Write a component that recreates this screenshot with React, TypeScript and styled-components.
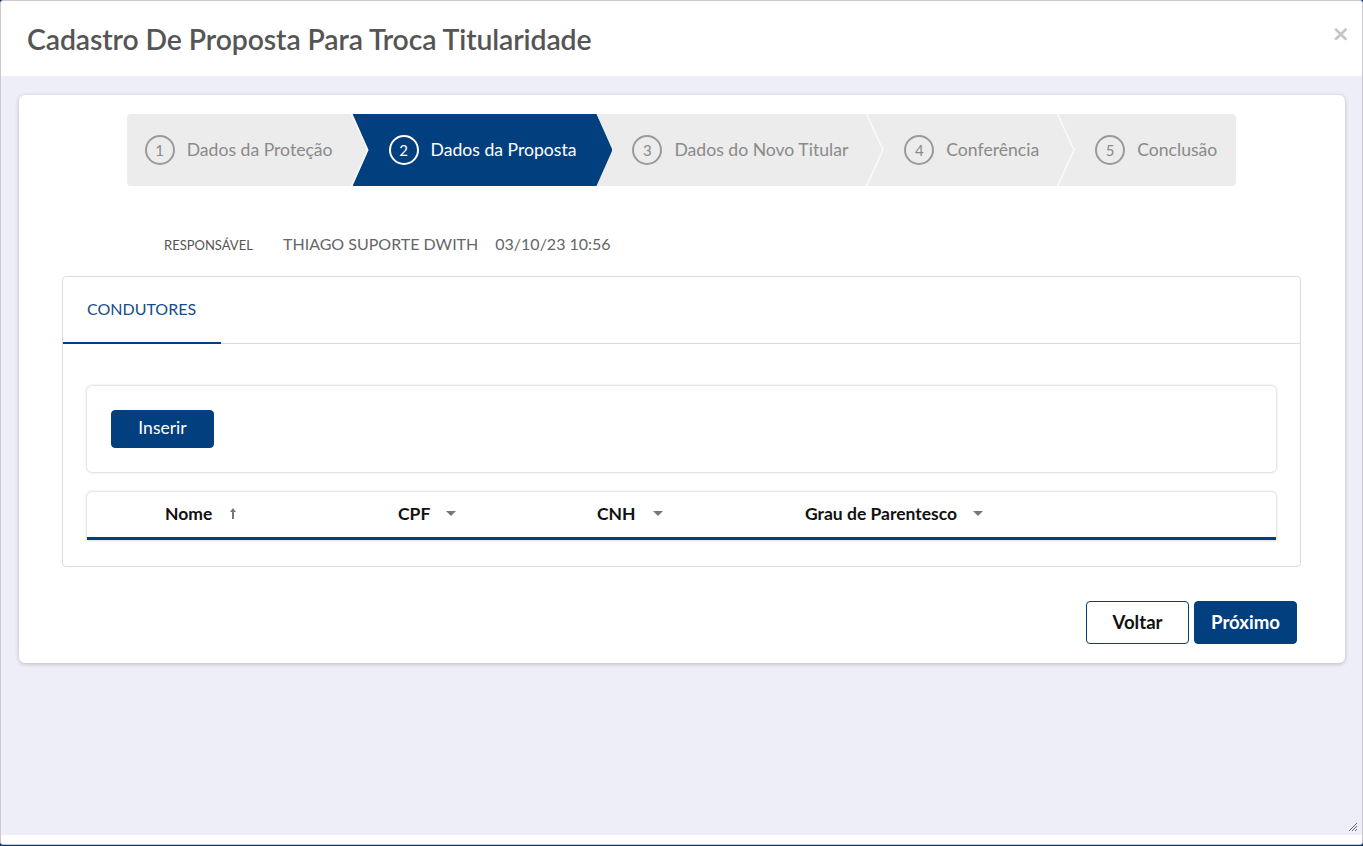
import React from "react";
import styled, { createGlobalStyle } from "styled-components";

const BLUE = "#023f7f";

const GlobalStyle = createGlobalStyle`
  html, body {
    margin: 0;
    padding: 0;
    background: #0d3766;
    font-family: "Lato", "Noto Sans", sans-serif;
  }
  * { box-sizing: border-box; }
`;

const Dialog = styled.div`
  width: 1363px;
  height: 845px;
  background: #fff;
  border: 1px solid #c9c9cf;
  border-radius: 3px;
  display: flex;
  flex-direction: column;
  overflow: hidden;
  position: relative;
`;

const Header = styled.header`
  height: 75px;
  flex: none;
  display: flex;
  align-items: center;
  justify-content: space-between;
  padding: 0 12px 0 26px;
`;

const Title = styled.h1`
  margin: 0;
  font-size: 28.4px;
  font-weight: 600;
  color: #555;
  letter-spacing: -0.1px;
`;

const Close = styled.button`
  border: 0;
  background: none;
  color: #c4c4c4;
  font-size: 22px;
  font-weight: 700;
  line-height: 1;
  padding: 0;
  margin-top: -10px;
  font-family: "DejaVu Sans", sans-serif;
  cursor: pointer;
`;

const Body = styled.div`
  flex: 1;
  background: #eeeef8;
  padding: 19px 17px 0 18px;
  position: relative;
`;

const FooterStrip = styled.div`
  height: 9px;
  flex: none;
  background: #fff;
`;

const Grip = styled.svg`
  position: absolute;
  right: 4px;
  bottom: 3px;
`;

const Card = styled.section`
  background: #fff;
  border-radius: 6px;
  box-shadow: 0 1px 4px rgba(0, 0, 0, 0.22);
  padding: 19px 44px 19px 43px;
  display: flex;
  flex-direction: column;
`;

const Stepper = styled.ol`
  align-self: center;
  display: flex;
  margin: 0;
  padding: 0;
  list-style: none;
  height: 72px;
  background: #ececec;
  border-radius: 4px;
`;

const Step = styled.li<{ $active?: boolean; $first?: boolean; $last?: boolean }>`
  position: relative;
  display: flex;
  align-items: center;
  gap: 12px;
  height: 100%;
  padding-left: ${(p) => (p.$first ? "18px" : "36px")};
  padding-right: ${(p) => (p.$last ? "19px" : "36px")};
  margin-right: ${(p) => (p.$last ? "0" : "-16px")};
  background: ${(p) => (p.$active ? BLUE : "transparent")};
  color: ${(p) => (p.$active ? "#fff" : "#8a8a8a")};
  z-index: ${(p) => (p.$active ? 2 : 1)};
  font-size: 17.6px;
  padding-bottom: 1px;
  white-space: nowrap;
  clip-path: ${(p) =>
    p.$active
      ? "polygon(0 0, calc(100% - 16px) 0, 100% 50%, calc(100% - 16px) 100%, 0 100%, 16px 50%)"
      : "none"};
`;

const StepNumber = styled.span<{ $active?: boolean }>`
  width: 30px;
  height: 30px;
  border-radius: 50%;
  border: 2px solid ${(p) => (p.$active ? "#fff" : "#9a9a9a")};
  display: flex;
  align-items: center;
  justify-content: center;
  font-size: 15px;
  color: ${(p) => (p.$active ? "#fff" : "#8a8a8a")};
  flex: none;
`;

const StepDivider = styled.svg`
  position: absolute;
  right: 0;
  top: 0;
`;

const InfoRow = styled.div`
  display: flex;
  align-items: baseline;
  margin: 48px 0 0 102px;
  height: 22px;
  color: #666;
`;

const InfoLabel = styled.span`
  font-size: 13px;
  color: #555;
  width: 119px;
`;

const InfoValue = styled.span`
  font-size: 16px;
  color: #666;
  margin-right: 17px;
`;

const TabPanel = styled.div`
  margin-top: 20px;
  border: 1px solid #dcdcdc;
  border-radius: 4px;
  padding-bottom: 26px;
`;

const TabBar = styled.div`
  display: flex;
  height: 67px;
  border-bottom: 1px solid #dcdcdc;
`;

const Tab = styled.button<{ $active?: boolean }>`
  border: 0;
  background: none;
  font-family: inherit;
  font-size: 16px;
  color: #124c8a;
  padding: 0 24px;
  width: 158px;
  text-align: left;
  border-bottom: 2px solid ${(p) => (p.$active ? BLUE : "transparent")};
  margin-bottom: -1px;
  padding-bottom: 2px;
`;

const TabContent = styled.div`
  padding: 42px 24px 0 24px;
  display: flex;
  flex-direction: column;
  gap: 20px;
`;

const Toolbar = styled.div`
  background: #fff;
  border-radius: 5px;
  box-shadow: 0 0 3px rgba(0, 0, 0, 0.28);
  padding: 24px;
  height: 86px;
`;

const PrimaryButton = styled.button<{ $h?: number; $bold?: boolean }>`
  background: ${BLUE};
  color: #fff;
  border: 1px solid ${BLUE};
  border-radius: 4px;
  width: 103px;
  height: ${(p) => p.$h ?? 38}px;
  font-family: inherit;
  font-size: ${(p) => (p.$bold ? "18.6px" : "17.5px")};
  font-weight: ${(p) => (p.$bold ? 700 : 400)};
  padding: 0 0 ${(p) => (p.$bold ? 2 : 3)}px;
  cursor: pointer;
`;

const OutlineButton = styled(PrimaryButton)`
  background: #fff;
  color: #111;
`;

const GridHead = styled.div`
  display: grid;
  grid-template-columns: 62px 233px 199px 208px 1fr;
  align-items: center;
  height: 48px;
  background: #fff;
  border-radius: 5px 5px 0 0;
  box-shadow: 0 0 3px rgba(0, 0, 0, 0.28);
  border-bottom: 3px solid ${BLUE};
`;

const HeadCell = styled.div`
  display: flex;
  align-items: center;
  padding-left: 16px;
  padding-bottom: 2px;
  font-size: 17.5px;
  font-weight: 700;
  color: #111;
`;

const SortIcon = styled.span<{ $gap: number }>`
  display: inline-flex;
  margin-left: ${(p) => p.$gap}px;
  color: #777;
`;

const Actions = styled.div`
  display: flex;
  justify-content: flex-end;
  gap: 5px;
  margin: 34px 4px 0 0;
`;

const steps = [
  "Dados da Proteção",
  "Dados da Proposta",
  "Dados do Novo Titular",
  "Conferência",
  "Conclusão",
];

const Caret = () => (
  <svg width="10" height="6" viewBox="0 0 10 6">
    <path d="M0 0h10L5 5z" fill="#777" />
  </svg>
);

const UpArrow = () => (
  <svg width="8" height="13" viewBox="0 0 8 13">
    <path d="M4 1L1 5h2v7h2V5h2z" fill="#777" />
  </svg>
);

const columns: { label: string; gap: number; icon: React.ReactNode }[] = [
  { label: "Nome", gap: 17, icon: <UpArrow /> },
  { label: "CPF", gap: 16, icon: <Caret /> },
  { label: "CNH", gap: 17, icon: <Caret /> },
  { label: "Grau de Parentesco", gap: 16, icon: <Caret /> },
];

export default function App() {
  const active = 1;
  return (
    <>
      <GlobalStyle />
      <Dialog>
        <Header>
          <Title>Cadastro De Proposta Para Troca Titularidade</Title>
          <Close aria-label="Fechar">×</Close>
        </Header>
        <Body>
          <Card>
            <Stepper>
              {steps.map((label, i) => (
                <Step
                  key={label}
                  $active={i === active}
                  $first={i === 0}
                  $last={i === steps.length - 1}
                >
                  <StepNumber $active={i === active}>{i + 1}</StepNumber>
                  {label}
                  {i !== active && i !== steps.length - 1 && (
                    <StepDivider width="18" height="72" viewBox="0 0 18 72">
                      <polyline
                        points="0.5,0 17,36 0.5,72"
                        fill="none"
                        stroke="#fafafa"
                        strokeWidth="1.5"
                      />
                    </StepDivider>
                  )}
                </Step>
              ))}
            </Stepper>

            <InfoRow>
              <InfoLabel>RESPONSÁVEL</InfoLabel>
              <InfoValue>THIAGO SUPORTE DWITH</InfoValue>
              <InfoValue>03/10/23 10:56</InfoValue>
            </InfoRow>

            <TabPanel>
              <TabBar>
                <Tab $active>CONDUTORES</Tab>
              </TabBar>
              <TabContent>
                <Toolbar>
                  <PrimaryButton>Inserir</PrimaryButton>
                </Toolbar>
                <GridHead>
                  <div />
                  {columns.map((c) => (
                    <HeadCell key={c.label}>
                      {c.label}
                      <SortIcon $gap={c.gap}>{c.icon}</SortIcon>
                    </HeadCell>
                  ))}
                </GridHead>
              </TabContent>
            </TabPanel>

            <Actions>
              <OutlineButton $h={43} $bold>
                Voltar
              </OutlineButton>
              <PrimaryButton $h={43} $bold>
                Próximo
              </PrimaryButton>
            </Actions>
          </Card>
          <Grip width="10" height="10" viewBox="0 0 10 10">
            <path d="M9 1L1 9M9 4L4 9M9 7L7 9" stroke="#666" strokeWidth="1" />
          </Grip>
        </Body>
        <FooterStrip />
      </Dialog>
    </>
  );
}
